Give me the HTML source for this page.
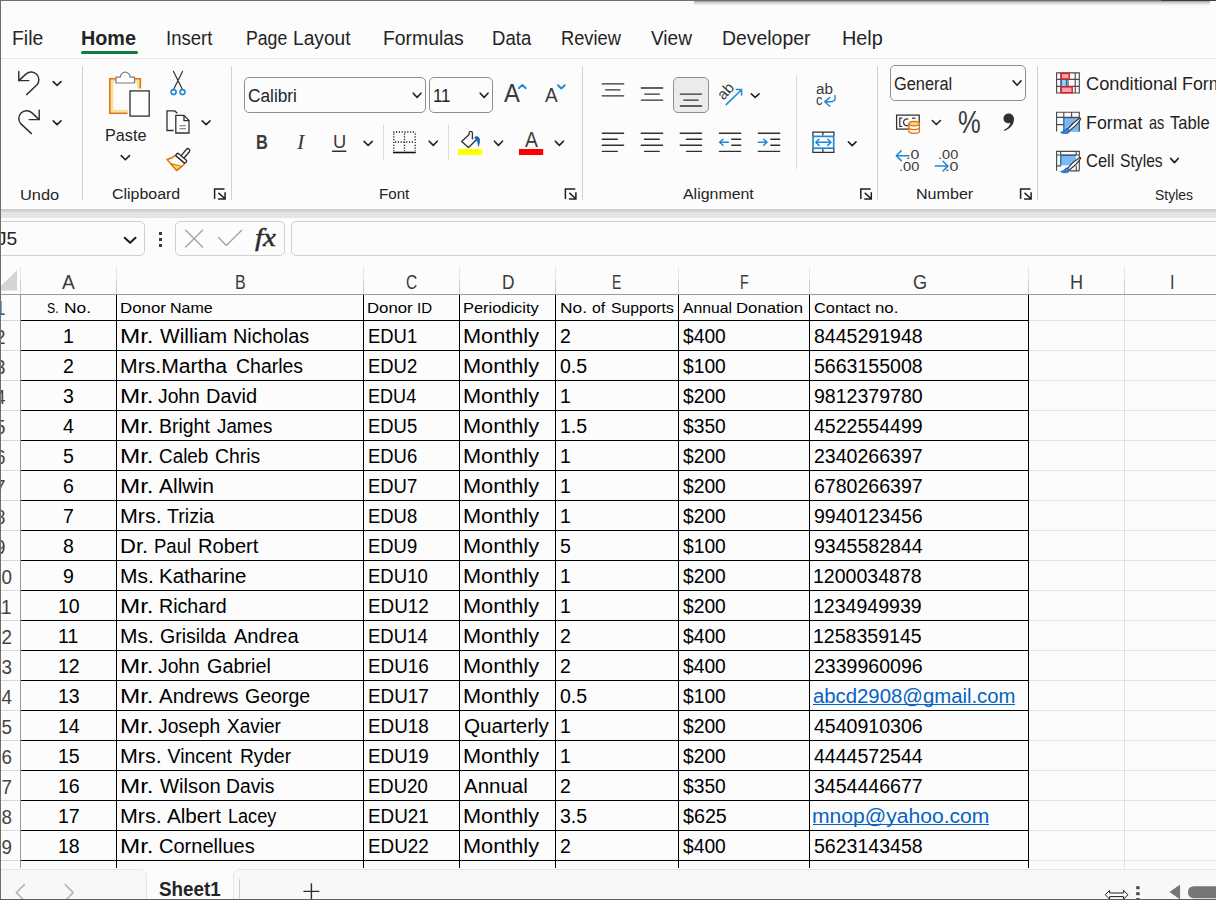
<!DOCTYPE html>
<html lang="en"><head><meta charset="utf-8"><title>Excel - Donor list</title>
<style>
html,body{margin:0;padding:0;}
body{width:1216px;height:900px;overflow:hidden;background:#fcfcfc;font-family:"Liberation Sans", sans-serif;color:#242424;}
#app{position:relative;width:1216px;height:900px;overflow:hidden;}
.b{position:absolute;box-sizing:border-box;}
.t{position:absolute;white-space:nowrap;line-height:1;transform-origin:0 0;}
svg{position:absolute;overflow:visible;}
.fx{-webkit-text-stroke:.45px #2b2b2b;}
</style></head><body><div id="app">
<div class="b" style="left:0px;top:0px;width:1216px;height:59px;background:#fcfcfc;"></div>
<div class="b" style="left:0px;top:58px;width:1216px;height:1px;background:#e6e6e6;"></div>
<div class="b" style="left:0px;top:59px;width:1216px;height:150px;background:#fcfcfc;"></div>
<div class="b" style="left:0px;top:209px;width:1216px;height:3px;background:linear-gradient(#c9c9c9,#d6d6d6);"></div>
<div class="b" style="left:0px;top:212px;width:1216px;height:6px;background:#e4e4e4;"></div>
<div class="b" style="left:0px;top:218px;width:1216px;height:49px;background:#fcfcfc;"></div>
<div class="b" style="left:0px;top:267px;width:1216px;height:602px;background:#fcfcfc;"></div>
<div class="b" style="left:694px;top:1px;width:516px;height:5px;background:linear-gradient(#9a9a9a,#d9d9d9 40%,#f1f1f1 80%,#fbfbfb);"></div>
<div class="b" style="left:81px;top:51px;width:57px;height:3px;background:#107c41;border-radius:1.5px;"></div>
<div class="b" style="left:82px;top:66px;width:1px;height:134px;background:#d2d2d2;"></div>
<div class="b" style="left:231px;top:66px;width:1px;height:134px;background:#d2d2d2;"></div>
<div class="b" style="left:582px;top:66px;width:1px;height:134px;background:#d2d2d2;"></div>
<div class="b" style="left:877px;top:66px;width:1px;height:134px;background:#d2d2d2;"></div>
<div class="b" style="left:1037px;top:66px;width:1px;height:134px;background:#d2d2d2;"></div>
<div class="b" style="left:383px;top:125px;width:1px;height:35px;background:#dcdcdc;"></div>
<div class="b" style="left:448px;top:125px;width:1px;height:35px;background:#dcdcdc;"></div>
<div class="b" style="left:796px;top:75px;width:1px;height:94px;background:#dcdcdc;"></div>
<div class="b" style="left:244px;top:77px;width:182px;height:36px;background:#fcfcfc;border:1px solid #8f8f8f;border-radius:5px;"></div>
<div class="b" style="left:429px;top:77px;width:64px;height:36px;background:#fcfcfc;border:1px solid #8f8f8f;border-radius:5px;"></div>
<div class="b" style="left:890px;top:65px;width:136px;height:36px;background:#fcfcfc;border:1px solid #8f8f8f;border-radius:5px;"></div>
<div class="b" style="left:673px;top:77px;width:36px;height:36px;background:#ebebeb;border:1px solid #8f8f8f;border-radius:5px;"></div>
<div class="b" style="left:-6px;top:221px;width:151px;height:35px;background:#fcfcfc;border:1px solid #d0d0d0;border-radius:5px;"></div>
<div class="b" style="left:175px;top:221px;width:110px;height:35px;background:#fcfcfc;border:1px solid #d0d0d0;border-radius:5px;"></div>
<div class="b" style="left:291px;top:221px;width:940px;height:35px;background:#fcfcfc;border:1px solid #d0d0d0;border-radius:5px;"></div>
<div class="b" style="left:158.5px;top:231.5px;width:3px;height:3px;background:#3a3a3a;"></div>
<div class="b" style="left:158.5px;top:237.5px;width:3px;height:3px;background:#3a3a3a;"></div>
<div class="b" style="left:158.5px;top:243.5px;width:3px;height:3px;background:#3a3a3a;"></div>
<div class="b" style="left:20px;top:267px;width:1px;height:27px;background:linear-gradient(#e8e8e8 0 50%,#cfcfcf 50% 100%);"></div>
<div class="b" style="left:116px;top:267px;width:1px;height:27px;background:linear-gradient(#e8e8e8 0 50%,#cfcfcf 50% 100%);"></div>
<div class="b" style="left:363px;top:267px;width:1px;height:27px;background:linear-gradient(#e8e8e8 0 50%,#cfcfcf 50% 100%);"></div>
<div class="b" style="left:459px;top:267px;width:1px;height:27px;background:linear-gradient(#e8e8e8 0 50%,#cfcfcf 50% 100%);"></div>
<div class="b" style="left:555px;top:267px;width:1px;height:27px;background:linear-gradient(#e8e8e8 0 50%,#cfcfcf 50% 100%);"></div>
<div class="b" style="left:678px;top:267px;width:1px;height:27px;background:linear-gradient(#e8e8e8 0 50%,#cfcfcf 50% 100%);"></div>
<div class="b" style="left:809px;top:267px;width:1px;height:27px;background:linear-gradient(#e8e8e8 0 50%,#cfcfcf 50% 100%);"></div>
<div class="b" style="left:1028px;top:267px;width:1px;height:27px;background:linear-gradient(#e8e8e8 0 50%,#cfcfcf 50% 100%);"></div>
<div class="b" style="left:1124px;top:267px;width:1px;height:27px;background:linear-gradient(#e8e8e8 0 50%,#cfcfcf 50% 100%);"></div>
<div class="b" style="left:1029px;top:320px;width:190px;height:1px;background:#e3e3e3;"></div>
<div class="b" style="left:1029px;top:350px;width:190px;height:1px;background:#e3e3e3;"></div>
<div class="b" style="left:1029px;top:380px;width:190px;height:1px;background:#e3e3e3;"></div>
<div class="b" style="left:1029px;top:410px;width:190px;height:1px;background:#e3e3e3;"></div>
<div class="b" style="left:1029px;top:440px;width:190px;height:1px;background:#e3e3e3;"></div>
<div class="b" style="left:1029px;top:470px;width:190px;height:1px;background:#e3e3e3;"></div>
<div class="b" style="left:1029px;top:500px;width:190px;height:1px;background:#e3e3e3;"></div>
<div class="b" style="left:1029px;top:530px;width:190px;height:1px;background:#e3e3e3;"></div>
<div class="b" style="left:1029px;top:560px;width:190px;height:1px;background:#e3e3e3;"></div>
<div class="b" style="left:1029px;top:590px;width:190px;height:1px;background:#e3e3e3;"></div>
<div class="b" style="left:1029px;top:620px;width:190px;height:1px;background:#e3e3e3;"></div>
<div class="b" style="left:1029px;top:650px;width:190px;height:1px;background:#e3e3e3;"></div>
<div class="b" style="left:1029px;top:680px;width:190px;height:1px;background:#e3e3e3;"></div>
<div class="b" style="left:1029px;top:710px;width:190px;height:1px;background:#e3e3e3;"></div>
<div class="b" style="left:1029px;top:740px;width:190px;height:1px;background:#e3e3e3;"></div>
<div class="b" style="left:1029px;top:770px;width:190px;height:1px;background:#e3e3e3;"></div>
<div class="b" style="left:1029px;top:800px;width:190px;height:1px;background:#e3e3e3;"></div>
<div class="b" style="left:1029px;top:830px;width:190px;height:1px;background:#e3e3e3;"></div>
<div class="b" style="left:1029px;top:860px;width:190px;height:1px;background:#e3e3e3;"></div>
<div class="b" style="left:1124px;top:295px;width:1px;height:574px;background:#e3e3e3;"></div>
<div class="b" style="left:1px;top:320px;width:19px;height:1px;background:#d9d9d9;"></div>
<div class="b" style="left:1px;top:350px;width:19px;height:1px;background:#d9d9d9;"></div>
<div class="b" style="left:1px;top:380px;width:19px;height:1px;background:#d9d9d9;"></div>
<div class="b" style="left:1px;top:410px;width:19px;height:1px;background:#d9d9d9;"></div>
<div class="b" style="left:1px;top:440px;width:19px;height:1px;background:#d9d9d9;"></div>
<div class="b" style="left:1px;top:470px;width:19px;height:1px;background:#d9d9d9;"></div>
<div class="b" style="left:1px;top:500px;width:19px;height:1px;background:#d9d9d9;"></div>
<div class="b" style="left:1px;top:530px;width:19px;height:1px;background:#d9d9d9;"></div>
<div class="b" style="left:1px;top:560px;width:19px;height:1px;background:#d9d9d9;"></div>
<div class="b" style="left:1px;top:590px;width:19px;height:1px;background:#d9d9d9;"></div>
<div class="b" style="left:1px;top:620px;width:19px;height:1px;background:#d9d9d9;"></div>
<div class="b" style="left:1px;top:650px;width:19px;height:1px;background:#d9d9d9;"></div>
<div class="b" style="left:1px;top:680px;width:19px;height:1px;background:#d9d9d9;"></div>
<div class="b" style="left:1px;top:710px;width:19px;height:1px;background:#d9d9d9;"></div>
<div class="b" style="left:1px;top:740px;width:19px;height:1px;background:#d9d9d9;"></div>
<div class="b" style="left:1px;top:770px;width:19px;height:1px;background:#d9d9d9;"></div>
<div class="b" style="left:1px;top:800px;width:19px;height:1px;background:#d9d9d9;"></div>
<div class="b" style="left:1px;top:830px;width:19px;height:1px;background:#d9d9d9;"></div>
<div class="b" style="left:1px;top:860px;width:19px;height:1px;background:#d9d9d9;"></div>
<div class="b" style="left:21px;top:320px;width:1008px;height:1px;background:#000;"></div>
<div class="b" style="left:21px;top:350px;width:1008px;height:1px;background:#000;"></div>
<div class="b" style="left:21px;top:380px;width:1008px;height:1px;background:#000;"></div>
<div class="b" style="left:21px;top:410px;width:1008px;height:1px;background:#000;"></div>
<div class="b" style="left:21px;top:440px;width:1008px;height:1px;background:#000;"></div>
<div class="b" style="left:21px;top:470px;width:1008px;height:1px;background:#000;"></div>
<div class="b" style="left:21px;top:500px;width:1008px;height:1px;background:#000;"></div>
<div class="b" style="left:21px;top:530px;width:1008px;height:1px;background:#000;"></div>
<div class="b" style="left:21px;top:560px;width:1008px;height:1px;background:#000;"></div>
<div class="b" style="left:21px;top:590px;width:1008px;height:1px;background:#000;"></div>
<div class="b" style="left:21px;top:620px;width:1008px;height:1px;background:#000;"></div>
<div class="b" style="left:21px;top:650px;width:1008px;height:1px;background:#000;"></div>
<div class="b" style="left:21px;top:680px;width:1008px;height:1px;background:#000;"></div>
<div class="b" style="left:21px;top:710px;width:1008px;height:1px;background:#000;"></div>
<div class="b" style="left:21px;top:740px;width:1008px;height:1px;background:#000;"></div>
<div class="b" style="left:21px;top:770px;width:1008px;height:1px;background:#000;"></div>
<div class="b" style="left:21px;top:800px;width:1008px;height:1px;background:#000;"></div>
<div class="b" style="left:21px;top:830px;width:1008px;height:1px;background:#000;"></div>
<div class="b" style="left:21px;top:860px;width:1008px;height:1px;background:#000;"></div>
<div class="b" style="left:116px;top:295px;width:1px;height:574px;background:#000;"></div>
<div class="b" style="left:363px;top:295px;width:1px;height:574px;background:#000;"></div>
<div class="b" style="left:459px;top:295px;width:1px;height:574px;background:#000;"></div>
<div class="b" style="left:555px;top:295px;width:1px;height:574px;background:#000;"></div>
<div class="b" style="left:678px;top:295px;width:1px;height:574px;background:#000;"></div>
<div class="b" style="left:809px;top:295px;width:1px;height:574px;background:#000;"></div>
<div class="b" style="left:1028px;top:295px;width:1px;height:574px;background:#000;"></div>
<div class="b" style="left:1px;top:294px;width:1216px;height:1px;background:#9b9b9b;"></div>
<div class="b" style="left:20px;top:295px;width:1px;height:574px;background:#9b9b9b;"></div>
<svg style="left:1px;top:270px" width="16" height="21" viewBox="0 0 16 21"><path d="M16 0V20.6H-4.6Z" fill="#d4d4d4"/></svg>
<div class="b" style="left:813px;top:704px;width:202.20000000000005px;height:1.3px;background:#0563c1;"></div>
<div class="b" style="left:813px;top:824px;width:176.0px;height:1.3px;background:#0563c1;"></div>
<span class="t" style="left:12.49px;top:29.00px;font-size:19.3px;transform:scaleX(1.0053);">File</span>
<span class="t" style="left:80.97px;top:29.00px;font-size:19.3px;transform:scaleX(1.0256);font-weight:700;">Home</span>
<span class="t" style="left:166.04px;top:29.00px;font-size:19.3px;transform:scaleX(0.9610);">Insert</span>
<span class="g"><span class="t" style="left:246.38px;top:29.00px;font-size:19.3px;transform:scaleX(0.9167);">Page</span> <span class="t" style="left:293.31px;top:29.00px;font-size:19.3px;transform:scaleX(0.9942);">Layout</span></span>
<span class="t" style="left:383.00px;top:29.00px;font-size:19.3px;transform:scaleX(1.0036);">Formulas</span>
<span class="t" style="left:492.04px;top:29.00px;font-size:19.3px;transform:scaleX(0.9624);">Data</span>
<span class="t" style="left:561.05px;top:29.00px;font-size:19.3px;transform:scaleX(0.9471);">Review</span>
<span class="t" style="left:651.00px;top:29.00px;font-size:19.3px;transform:scaleX(0.9875);">View</span>
<span class="t" style="left:721.99px;top:29.00px;font-size:19.3px;transform:scaleX(1.0061);">Developer</span>
<span class="t" style="left:841.97px;top:29.00px;font-size:19.3px;transform:scaleX(1.0282);">Help</span>
<span class="t" style="left:20.44px;top:187.00px;font-size:15.5px;transform:scaleX(1.0583);">Undo</span>
<span class="t" style="left:111.50px;top:186.00px;font-size:15.5px;transform:scaleX(1.0270);">Clipboard</span>
<span class="t" style="left:379.02px;top:186.00px;font-size:15.5px;transform:scaleX(0.9769);">Font</span>
<span class="t" style="left:682.50px;top:186.00px;font-size:15.5px;transform:scaleX(1.0270);">Alignment</span>
<span class="t" style="left:915.96px;top:186.00px;font-size:15.5px;transform:scaleX(1.0377);">Number</span>
<span class="t" style="left:1155.00px;top:187.00px;font-size:15.5px;transform:scaleX(0.8997);">Styles</span>
<span class="t" style="left:105.05px;top:127.00px;font-size:17px;transform:scaleX(0.9520);">Paste</span>
<span class="t" style="left:247.50px;top:87.00px;font-size:18px;transform:scaleX(0.9598);">Calibri</span>
<span class="t" style="left:432.57px;top:87.00px;font-size:18px;transform:scaleX(0.9335);">11</span>
<span class="t" style="left:893.70px;top:75.00px;font-size:18px;transform:scaleX(0.9090);">General</span>
<span class="g"><span class="t" style="left:1085.80px;top:75.00px;font-size:18.2px;transform:scaleX(1.0027);">Conditional</span> <span class="t" style="left:1182.32px;top:75.00px;font-size:18.2px;transform:scaleX(0.9800);">Formatting</span></span>
<span class="g"><span class="t" style="left:1085.82px;top:114.00px;font-size:18.2px;transform:scaleX(0.9797);">Format</span> <span class="t" style="left:1148.70px;top:114.00px;font-size:18.2px;transform:scaleX(0.8004);">as</span> <span class="t" style="left:1170.20px;top:114.00px;font-size:18.2px;transform:scaleX(0.9109);">Table</span></span>
<span class="g"><span class="t" style="left:1085.80px;top:152.00px;font-size:18.2px;transform:scaleX(0.9079);">Cell</span> <span class="t" style="left:1120.10px;top:152.00px;font-size:18.2px;transform:scaleX(0.8618);">Styles</span></span>
<span class="t" style="left:-3.00px;top:230.00px;font-size:18.5px;transform:scaleX(1.0390);">J5</span>
<span class="t fx" style="left:255.10px;top:225.00px;font-size:26px;transform:scaleX(1.1184);font-style:italic;font-family:'Liberation Serif', serif;color:#2b2b2b;">fx</span>
<span class="t" style="left:62.10px;top:273.00px;font-size:19.4px;transform:scaleX(0.9923);color:#3b3b3b;">A</span>
<span class="t" style="left:235.27px;top:273.00px;font-size:19.4px;transform:scaleX(0.8273);color:#3b3b3b;">B</span>
<span class="t" style="left:406.30px;top:273.00px;font-size:19.4px;transform:scaleX(0.8000);color:#3b3b3b;">C</span>
<span class="t" style="left:501.71px;top:273.00px;font-size:19.4px;transform:scaleX(0.8923);color:#3b3b3b;">D</span>
<span class="t" style="left:612.27px;top:273.00px;font-size:19.4px;transform:scaleX(0.7250);color:#3b3b3b;">E</span>
<span class="t" style="left:739.66px;top:273.00px;font-size:19.4px;transform:scaleX(0.7364);color:#3b3b3b;">F</span>
<span class="t" style="left:912.60px;top:273.00px;font-size:19.4px;transform:scaleX(0.9357);color:#3b3b3b;">G</span>
<span class="t" style="left:1070.27px;top:273.00px;font-size:19.4px;transform:scaleX(0.9333);color:#3b3b3b;">H</span>
<span class="t" style="left:1170.47px;top:273.00px;font-size:19.4px;transform:scaleX(0.8333);color:#3b3b3b;">I</span>
<span class="t rn" style="left:-4.73px;top:299.00px;font-size:19.4px;transform:scaleX(0.9700);color:#444;">1</span>
<span class="t rn" style="left:-4.73px;top:328.00px;font-size:19.4px;transform:scaleX(0.9700);color:#444;">2</span>
<span class="t rn" style="left:-4.73px;top:358.00px;font-size:19.4px;transform:scaleX(0.9700);color:#444;">3</span>
<span class="t rn" style="left:-4.73px;top:388.00px;font-size:19.4px;transform:scaleX(0.9700);color:#444;">4</span>
<span class="t rn" style="left:-4.73px;top:418.00px;font-size:19.4px;transform:scaleX(0.9700);color:#444;">5</span>
<span class="t rn" style="left:-4.73px;top:448.00px;font-size:19.4px;transform:scaleX(0.9700);color:#444;">6</span>
<span class="t rn" style="left:-4.73px;top:478.00px;font-size:19.4px;transform:scaleX(0.9700);color:#444;">7</span>
<span class="t rn" style="left:-4.73px;top:508.00px;font-size:19.4px;transform:scaleX(0.9700);color:#444;">8</span>
<span class="t rn" style="left:-4.73px;top:538.00px;font-size:19.4px;transform:scaleX(0.9700);color:#444;">9</span>
<span class="t rn" style="left:-8.76px;top:568.00px;font-size:19.4px;transform:scaleX(0.9700);color:#444;">10</span>
<span class="t rn" style="left:-8.06px;top:598.00px;font-size:19.4px;transform:scaleX(0.9700);color:#444;">11</span>
<span class="t rn" style="left:-8.76px;top:628.00px;font-size:19.4px;transform:scaleX(0.9700);color:#444;">12</span>
<span class="t rn" style="left:-8.76px;top:658.00px;font-size:19.4px;transform:scaleX(0.9700);color:#444;">13</span>
<span class="t rn" style="left:-8.76px;top:688.00px;font-size:19.4px;transform:scaleX(0.9700);color:#444;">14</span>
<span class="t rn" style="left:-8.76px;top:718.00px;font-size:19.4px;transform:scaleX(0.9700);color:#444;">15</span>
<span class="t rn" style="left:-8.76px;top:748.00px;font-size:19.4px;transform:scaleX(0.9700);color:#444;">16</span>
<span class="t rn" style="left:-8.76px;top:778.00px;font-size:19.4px;transform:scaleX(0.9700);color:#444;">17</span>
<span class="t rn" style="left:-8.76px;top:808.00px;font-size:19.4px;transform:scaleX(0.9700);color:#444;">18</span>
<span class="t rn" style="left:-8.76px;top:838.00px;font-size:19.4px;transform:scaleX(0.9700);color:#444;">19</span>
<span class="t rn" style="left:-8.76px;top:868.00px;font-size:19.4px;transform:scaleX(0.9700);color:#444;">20</span>
<span class="g"><span class="t" style="left:47.40px;top:301.00px;font-size:14.5px;transform:scaleX(0.8444);color:#000;">S.</span> <span class="t" style="left:63.50px;top:301.00px;font-size:14.5px;transform:scaleX(1.1979);color:#000;">No.</span></span>
<span class="g"><span class="t" style="left:119.74px;top:301.00px;font-size:14.5px;transform:scaleX(1.1613);color:#000;">Donor</span> <span class="t" style="left:170.49px;top:301.00px;font-size:14.5px;transform:scaleX(1.1060);color:#000;">Name</span></span>
<span class="g"><span class="t" style="left:366.74px;top:301.00px;font-size:14.5px;transform:scaleX(1.1561);color:#000;">Donor</span> <span class="t" style="left:417.36px;top:301.00px;font-size:14.5px;transform:scaleX(1.0362);color:#000;">ID</span></span>
<span class="g"><span class="t" style="left:462.77px;top:301.00px;font-size:14.5px;transform:scaleX(1.1315);color:#000;">Periodicity</span></span>
<span class="g"><span class="t" style="left:559.60px;top:301.00px;font-size:14.5px;transform:scaleX(1.1979);color:#000;">No.</span> <span class="t" style="left:591.50px;top:301.00px;font-size:14.5px;transform:scaleX(1.0869);color:#000;">of</span> <span class="t" style="left:610.60px;top:301.00px;font-size:14.5px;transform:scaleX(1.0816);color:#000;">Supports</span></span>
<span class="g"><span class="t" style="left:682.50px;top:301.00px;font-size:14.5px;transform:scaleX(1.0840);color:#000;">Annual</span> <span class="t" style="left:736.15px;top:301.00px;font-size:14.5px;transform:scaleX(1.1548);color:#000;">Donation</span></span>
<span class="g"><span class="t" style="left:813.75px;top:301.00px;font-size:14.5px;transform:scaleX(1.1263);color:#000;">Contact</span> <span class="t" style="left:875.40px;top:301.00px;font-size:14.5px;transform:scaleX(1.1606);color:#000;">no.</span></span>
<span class="t" style="left:63.17px;top:327.00px;font-size:19.4px;transform:scaleX(1.0070);color:#000;">1</span>
<span class="g"><span class="t" style="left:120.15px;top:327.00px;font-size:19.4px;transform:scaleX(1.2470);color:#000;">Mr.</span> <span class="t" style="left:159.60px;top:327.00px;font-size:19.4px;transform:scaleX(1.0764);color:#000;">William</span> <span class="t" style="left:232.58px;top:327.00px;font-size:19.4px;transform:scaleX(1.0238);color:#000;">Nicholas</span></span>
<span class="t" style="left:367.55px;top:327.00px;font-size:19.4px;transform:scaleX(0.9511);color:#000;">EDU1</span>
<span class="t" style="left:462.88px;top:327.00px;font-size:19.4px;transform:scaleX(1.1198);color:#000;">Monthly</span>
<span class="t" style="left:560.40px;top:327.00px;font-size:19.4px;transform:scaleX(1.0070);color:#000;">2</span>
<span class="t" style="left:682.75px;top:327.00px;font-size:19.4px;transform:scaleX(0.9919);color:#000;">$400</span>
<span class="t" style="left:813.75px;top:327.00px;font-size:19.4px;transform:scaleX(1.0070);color:#000;">8445291948</span>
<span class="t" style="left:63.17px;top:357.00px;font-size:19.4px;transform:scaleX(1.0070);color:#000;">2</span>
<span class="g"><span class="t" style="left:120.31px;top:357.00px;font-size:19.4px;transform:scaleX(1.0919);color:#000;">Mrs.Martha</span> <span class="t" style="left:235.60px;top:357.00px;font-size:19.4px;transform:scaleX(1.0042);color:#000;">Charles</span></span>
<span class="t" style="left:367.55px;top:357.00px;font-size:19.4px;transform:scaleX(0.9511);color:#000;">EDU2</span>
<span class="t" style="left:462.88px;top:357.00px;font-size:19.4px;transform:scaleX(1.1198);color:#000;">Monthly</span>
<span class="t" style="left:560.40px;top:357.00px;font-size:19.4px;transform:scaleX(1.0070);color:#000;">0.5</span>
<span class="t" style="left:682.75px;top:357.00px;font-size:19.4px;transform:scaleX(0.9919);color:#000;">$100</span>
<span class="t" style="left:813.75px;top:357.00px;font-size:19.4px;transform:scaleX(1.0070);color:#000;">5663155008</span>
<span class="t" style="left:63.17px;top:387.00px;font-size:19.4px;transform:scaleX(1.0070);color:#000;">3</span>
<span class="g"><span class="t" style="left:120.15px;top:387.00px;font-size:19.4px;transform:scaleX(1.2470);color:#000;">Mr.</span> <span class="t" style="left:158.00px;top:387.00px;font-size:19.4px;transform:scaleX(0.9936);color:#000;">John</span> <span class="t" style="left:206.37px;top:387.00px;font-size:19.4px;transform:scaleX(1.0295);color:#000;">David</span></span>
<span class="t" style="left:367.57px;top:387.00px;font-size:19.4px;transform:scaleX(0.9325);color:#000;">EDU4</span>
<span class="t" style="left:462.88px;top:387.00px;font-size:19.4px;transform:scaleX(1.1198);color:#000;">Monthly</span>
<span class="t" style="left:560.19px;top:387.00px;font-size:19.4px;transform:scaleX(1.0070);color:#000;">1</span>
<span class="t" style="left:682.75px;top:387.00px;font-size:19.4px;transform:scaleX(0.9919);color:#000;">$200</span>
<span class="t" style="left:813.75px;top:387.00px;font-size:19.4px;transform:scaleX(1.0070);color:#000;">9812379780</span>
<span class="t" style="left:63.17px;top:417.00px;font-size:19.4px;transform:scaleX(1.0070);color:#000;">4</span>
<span class="g"><span class="t" style="left:120.15px;top:417.00px;font-size:19.4px;transform:scaleX(1.2470);color:#000;">Mr.</span> <span class="t" style="left:158.60px;top:417.00px;font-size:19.4px;transform:scaleX(1.0026);color:#000;">Bright</span> <span class="t" style="left:217.00px;top:417.00px;font-size:19.4px;transform:scaleX(0.9678);color:#000;">James</span></span>
<span class="t" style="left:367.55px;top:417.00px;font-size:19.4px;transform:scaleX(0.9511);color:#000;">EDU5</span>
<span class="t" style="left:462.88px;top:417.00px;font-size:19.4px;transform:scaleX(1.1198);color:#000;">Monthly</span>
<span class="t" style="left:560.19px;top:417.00px;font-size:19.4px;transform:scaleX(1.0070);color:#000;">1.5</span>
<span class="t" style="left:682.75px;top:417.00px;font-size:19.4px;transform:scaleX(0.9919);color:#000;">$350</span>
<span class="t" style="left:813.75px;top:417.00px;font-size:19.4px;transform:scaleX(1.0070);color:#000;">4522554499</span>
<span class="t" style="left:63.17px;top:447.00px;font-size:19.4px;transform:scaleX(1.0070);color:#000;">5</span>
<span class="g"><span class="t" style="left:120.15px;top:447.00px;font-size:19.4px;transform:scaleX(1.2470);color:#000;">Mr.</span> <span class="t" style="left:159.00px;top:447.00px;font-size:19.4px;transform:scaleX(0.9743);color:#000;">Caleb</span> <span class="t" style="left:214.60px;top:447.00px;font-size:19.4px;transform:scaleX(0.9966);color:#000;">Chris</span></span>
<span class="t" style="left:367.55px;top:447.00px;font-size:19.4px;transform:scaleX(0.9511);color:#000;">EDU6</span>
<span class="t" style="left:462.88px;top:447.00px;font-size:19.4px;transform:scaleX(1.1198);color:#000;">Monthly</span>
<span class="t" style="left:560.19px;top:447.00px;font-size:19.4px;transform:scaleX(1.0070);color:#000;">1</span>
<span class="t" style="left:682.75px;top:447.00px;font-size:19.4px;transform:scaleX(0.9919);color:#000;">$200</span>
<span class="t" style="left:813.75px;top:447.00px;font-size:19.4px;transform:scaleX(1.0070);color:#000;">2340266397</span>
<span class="t" style="left:63.17px;top:477.00px;font-size:19.4px;transform:scaleX(1.0070);color:#000;">6</span>
<span class="g"><span class="t" style="left:120.15px;top:477.00px;font-size:19.4px;transform:scaleX(1.2470);color:#000;">Mr.</span> <span class="t" style="left:158.60px;top:477.00px;font-size:19.4px;transform:scaleX(1.0830);color:#000;">Allwin</span></span>
<span class="t" style="left:367.55px;top:477.00px;font-size:19.4px;transform:scaleX(0.9511);color:#000;">EDU7</span>
<span class="t" style="left:462.88px;top:477.00px;font-size:19.4px;transform:scaleX(1.1198);color:#000;">Monthly</span>
<span class="t" style="left:560.19px;top:477.00px;font-size:19.4px;transform:scaleX(1.0070);color:#000;">1</span>
<span class="t" style="left:682.75px;top:477.00px;font-size:19.4px;transform:scaleX(0.9919);color:#000;">$200</span>
<span class="t" style="left:813.75px;top:477.00px;font-size:19.4px;transform:scaleX(1.0070);color:#000;">6780266397</span>
<span class="t" style="left:63.17px;top:507.00px;font-size:19.4px;transform:scaleX(1.0070);color:#000;">7</span>
<span class="g"><span class="t" style="left:120.30px;top:507.00px;font-size:19.4px;transform:scaleX(1.1047);color:#000;">Mrs.</span> <span class="t" style="left:167.00px;top:507.00px;font-size:19.4px;transform:scaleX(1.0108);color:#000;">Trizia</span></span>
<span class="t" style="left:367.55px;top:507.00px;font-size:19.4px;transform:scaleX(0.9511);color:#000;">EDU8</span>
<span class="t" style="left:462.88px;top:507.00px;font-size:19.4px;transform:scaleX(1.1198);color:#000;">Monthly</span>
<span class="t" style="left:560.19px;top:507.00px;font-size:19.4px;transform:scaleX(1.0070);color:#000;">1</span>
<span class="t" style="left:682.75px;top:507.00px;font-size:19.4px;transform:scaleX(0.9919);color:#000;">$200</span>
<span class="t" style="left:813.75px;top:507.00px;font-size:19.4px;transform:scaleX(1.0070);color:#000;">9940123456</span>
<span class="t" style="left:63.17px;top:537.00px;font-size:19.4px;transform:scaleX(1.0070);color:#000;">8</span>
<span class="g"><span class="t" style="left:120.47px;top:537.00px;font-size:19.4px;transform:scaleX(1.1344);color:#000;">Dr.</span> <span class="t" style="left:153.65px;top:537.00px;font-size:19.4px;transform:scaleX(0.9546);color:#000;">Paul</span> <span class="t" style="left:197.56px;top:537.00px;font-size:19.4px;transform:scaleX(1.0378);color:#000;">Robert</span></span>
<span class="t" style="left:367.55px;top:537.00px;font-size:19.4px;transform:scaleX(0.9511);color:#000;">EDU9</span>
<span class="t" style="left:462.88px;top:537.00px;font-size:19.4px;transform:scaleX(1.1198);color:#000;">Monthly</span>
<span class="t" style="left:560.40px;top:537.00px;font-size:19.4px;transform:scaleX(1.0070);color:#000;">5</span>
<span class="t" style="left:682.75px;top:537.00px;font-size:19.4px;transform:scaleX(0.9919);color:#000;">$100</span>
<span class="t" style="left:813.75px;top:537.00px;font-size:19.4px;transform:scaleX(1.0070);color:#000;">9345582844</span>
<span class="t" style="left:63.17px;top:567.00px;font-size:19.4px;transform:scaleX(1.0070);color:#000;">9</span>
<span class="g"><span class="t" style="left:120.32px;top:567.00px;font-size:19.4px;transform:scaleX(1.0815);color:#000;">Ms.</span> <span class="t" style="left:159.35px;top:567.00px;font-size:19.4px;transform:scaleX(1.0539);color:#000;">Katharine</span></span>
<span class="t" style="left:367.54px;top:567.00px;font-size:19.4px;transform:scaleX(0.9559);color:#000;">EDU10</span>
<span class="t" style="left:462.88px;top:567.00px;font-size:19.4px;transform:scaleX(1.1198);color:#000;">Monthly</span>
<span class="t" style="left:560.19px;top:567.00px;font-size:19.4px;transform:scaleX(1.0070);color:#000;">1</span>
<span class="t" style="left:682.75px;top:567.00px;font-size:19.4px;transform:scaleX(0.9919);color:#000;">$200</span>
<span class="t" style="left:812.74px;top:567.00px;font-size:19.4px;transform:scaleX(1.0070);color:#000;">1200034878</span>
<span class="t" style="left:57.74px;top:597.00px;font-size:19.4px;transform:scaleX(1.0070);color:#000;">10</span>
<span class="g"><span class="t" style="left:120.15px;top:597.00px;font-size:19.4px;transform:scaleX(1.2470);color:#000;">Mr.</span> <span class="t" style="left:158.59px;top:597.00px;font-size:19.4px;transform:scaleX(1.0118);color:#000;">Richard</span></span>
<span class="t" style="left:367.53px;top:597.00px;font-size:19.4px;transform:scaleX(0.9716);color:#000;">EDU12</span>
<span class="t" style="left:462.88px;top:597.00px;font-size:19.4px;transform:scaleX(1.1198);color:#000;">Monthly</span>
<span class="t" style="left:560.19px;top:597.00px;font-size:19.4px;transform:scaleX(1.0070);color:#000;">1</span>
<span class="t" style="left:682.75px;top:597.00px;font-size:19.4px;transform:scaleX(0.9919);color:#000;">$200</span>
<span class="t" style="left:812.74px;top:597.00px;font-size:19.4px;transform:scaleX(1.0070);color:#000;">1234949939</span>
<span class="t" style="left:58.47px;top:627.00px;font-size:19.4px;transform:scaleX(1.0070);color:#000;">11</span>
<span class="g"><span class="t" style="left:120.32px;top:627.00px;font-size:19.4px;transform:scaleX(1.0815);color:#000;">Ms.</span> <span class="t" style="left:159.60px;top:627.00px;font-size:19.4px;transform:scaleX(1.0069);color:#000;">Grisilda</span> <span class="t" style="left:233.60px;top:627.00px;font-size:19.4px;transform:scaleX(1.0328);color:#000;">Andrea</span></span>
<span class="t" style="left:367.54px;top:627.00px;font-size:19.4px;transform:scaleX(0.9559);color:#000;">EDU14</span>
<span class="t" style="left:462.88px;top:627.00px;font-size:19.4px;transform:scaleX(1.1198);color:#000;">Monthly</span>
<span class="t" style="left:560.40px;top:627.00px;font-size:19.4px;transform:scaleX(1.0070);color:#000;">2</span>
<span class="t" style="left:682.75px;top:627.00px;font-size:19.4px;transform:scaleX(0.9919);color:#000;">$400</span>
<span class="t" style="left:812.74px;top:627.00px;font-size:19.4px;transform:scaleX(1.0070);color:#000;">1258359145</span>
<span class="t" style="left:57.74px;top:657.00px;font-size:19.4px;transform:scaleX(1.0070);color:#000;">12</span>
<span class="g"><span class="t" style="left:120.15px;top:657.00px;font-size:19.4px;transform:scaleX(1.2470);color:#000;">Mr.</span> <span class="t" style="left:158.00px;top:657.00px;font-size:19.4px;transform:scaleX(0.9936);color:#000;">John</span> <span class="t" style="left:207.40px;top:657.00px;font-size:19.4px;transform:scaleX(1.0225);color:#000;">Gabriel</span></span>
<span class="t" style="left:367.53px;top:657.00px;font-size:19.4px;transform:scaleX(0.9716);color:#000;">EDU16</span>
<span class="t" style="left:462.88px;top:657.00px;font-size:19.4px;transform:scaleX(1.1198);color:#000;">Monthly</span>
<span class="t" style="left:560.40px;top:657.00px;font-size:19.4px;transform:scaleX(1.0070);color:#000;">2</span>
<span class="t" style="left:682.75px;top:657.00px;font-size:19.4px;transform:scaleX(0.9919);color:#000;">$400</span>
<span class="t" style="left:813.75px;top:657.00px;font-size:19.4px;transform:scaleX(1.0070);color:#000;">2339960096</span>
<span class="t" style="left:57.74px;top:687.00px;font-size:19.4px;transform:scaleX(1.0070);color:#000;">13</span>
<span class="g"><span class="t" style="left:120.15px;top:687.00px;font-size:19.4px;transform:scaleX(1.2470);color:#000;">Mr.</span> <span class="t" style="left:158.60px;top:687.00px;font-size:19.4px;transform:scaleX(1.0542);color:#000;">Andrews</span> <span class="t" style="left:244.60px;top:687.00px;font-size:19.4px;transform:scaleX(1.0079);color:#000;">George</span></span>
<span class="t" style="left:367.53px;top:687.00px;font-size:19.4px;transform:scaleX(0.9716);color:#000;">EDU17</span>
<span class="t" style="left:462.88px;top:687.00px;font-size:19.4px;transform:scaleX(1.1198);color:#000;">Monthly</span>
<span class="t" style="left:560.40px;top:687.00px;font-size:19.4px;transform:scaleX(1.0070);color:#000;">0.5</span>
<span class="t" style="left:682.75px;top:687.00px;font-size:19.4px;transform:scaleX(0.9919);color:#000;">$100</span>
<span class="t" style="left:813.40px;top:687.00px;font-size:19.4px;transform:scaleX(1.0480);color:#0563c1;">abcd2908@gmail.com</span>
<span class="t" style="left:57.74px;top:717.00px;font-size:19.4px;transform:scaleX(1.0070);color:#000;">14</span>
<span class="g"><span class="t" style="left:120.15px;top:717.00px;font-size:19.4px;transform:scaleX(1.2470);color:#000;">Mr.</span> <span class="t" style="left:158.00px;top:717.00px;font-size:19.4px;transform:scaleX(0.9944);color:#000;">Joseph</span> <span class="t" style="left:226.60px;top:717.00px;font-size:19.4px;transform:scaleX(0.9801);color:#000;">Xavier</span></span>
<span class="t" style="left:367.53px;top:717.00px;font-size:19.4px;transform:scaleX(0.9716);color:#000;">EDU18</span>
<span class="t" style="left:464.00px;top:717.00px;font-size:19.4px;transform:scaleX(1.0650);color:#000;">Quarterly</span>
<span class="t" style="left:560.19px;top:717.00px;font-size:19.4px;transform:scaleX(1.0070);color:#000;">1</span>
<span class="t" style="left:682.75px;top:717.00px;font-size:19.4px;transform:scaleX(0.9919);color:#000;">$200</span>
<span class="t" style="left:813.75px;top:717.00px;font-size:19.4px;transform:scaleX(1.0070);color:#000;">4540910306</span>
<span class="t" style="left:57.74px;top:747.00px;font-size:19.4px;transform:scaleX(1.0070);color:#000;">15</span>
<span class="g"><span class="t" style="left:120.30px;top:747.00px;font-size:19.4px;transform:scaleX(1.1047);color:#000;">Mrs.</span> <span class="t" style="left:167.60px;top:747.00px;font-size:19.4px;color:#000;">Vincent</span> <span class="t" style="left:240.41px;top:747.00px;font-size:19.4px;transform:scaleX(0.9870);color:#000;">Ryder</span></span>
<span class="t" style="left:367.53px;top:747.00px;font-size:19.4px;transform:scaleX(0.9716);color:#000;">EDU19</span>
<span class="t" style="left:462.88px;top:747.00px;font-size:19.4px;transform:scaleX(1.1198);color:#000;">Monthly</span>
<span class="t" style="left:560.19px;top:747.00px;font-size:19.4px;transform:scaleX(1.0070);color:#000;">1</span>
<span class="t" style="left:682.75px;top:747.00px;font-size:19.4px;transform:scaleX(0.9919);color:#000;">$200</span>
<span class="t" style="left:813.75px;top:747.00px;font-size:19.4px;transform:scaleX(1.0070);color:#000;">4444572544</span>
<span class="t" style="left:57.74px;top:777.00px;font-size:19.4px;transform:scaleX(1.0070);color:#000;">16</span>
<span class="g"><span class="t" style="left:120.15px;top:777.00px;font-size:19.4px;transform:scaleX(1.2470);color:#000;">Mr.</span> <span class="t" style="left:159.60px;top:777.00px;font-size:19.4px;transform:scaleX(1.0419);color:#000;">Wilson</span> <span class="t" style="left:226.40px;top:777.00px;font-size:19.4px;transform:scaleX(0.9959);color:#000;">Davis</span></span>
<span class="t" style="left:367.54px;top:777.00px;font-size:19.4px;transform:scaleX(0.9559);color:#000;">EDU20</span>
<span class="t" style="left:464.00px;top:777.00px;font-size:19.4px;transform:scaleX(1.0571);color:#000;">Annual</span>
<span class="t" style="left:560.40px;top:777.00px;font-size:19.4px;transform:scaleX(1.0070);color:#000;">2</span>
<span class="t" style="left:682.75px;top:777.00px;font-size:19.4px;transform:scaleX(0.9919);color:#000;">$350</span>
<span class="t" style="left:813.75px;top:777.00px;font-size:19.4px;transform:scaleX(1.0070);color:#000;">3454446677</span>
<span class="t" style="left:57.74px;top:807.00px;font-size:19.4px;transform:scaleX(1.0070);color:#000;">17</span>
<span class="g"><span class="t" style="left:120.30px;top:807.00px;font-size:19.4px;transform:scaleX(1.1047);color:#000;">Mrs.</span> <span class="t" style="left:167.40px;top:807.00px;font-size:19.4px;transform:scaleX(1.0650);color:#000;">Albert</span> <span class="t" style="left:228.47px;top:807.00px;font-size:19.4px;transform:scaleX(0.9325);color:#000;">Lacey</span></span>
<span class="t" style="left:367.53px;top:807.00px;font-size:19.4px;transform:scaleX(0.9716);color:#000;">EDU21</span>
<span class="t" style="left:462.88px;top:807.00px;font-size:19.4px;transform:scaleX(1.1198);color:#000;">Monthly</span>
<span class="t" style="left:560.40px;top:807.00px;font-size:19.4px;transform:scaleX(1.0070);color:#000;">3.5</span>
<span class="t" style="left:682.75px;top:807.00px;font-size:19.4px;transform:scaleX(1.0153);color:#000;">$625</span>
<span class="t" style="left:812.31px;top:807.00px;font-size:19.4px;transform:scaleX(1.0883);color:#0563c1;">mnop@yahoo.com</span>
<span class="t" style="left:57.74px;top:837.00px;font-size:19.4px;transform:scaleX(1.0070);color:#000;">18</span>
<span class="g"><span class="t" style="left:120.15px;top:837.00px;font-size:19.4px;transform:scaleX(1.2470);color:#000;">Mr.</span> <span class="t" style="left:159.00px;top:837.00px;font-size:19.4px;transform:scaleX(1.0326);color:#000;">Cornellues</span></span>
<span class="t" style="left:367.53px;top:837.00px;font-size:19.4px;transform:scaleX(0.9716);color:#000;">EDU22</span>
<span class="t" style="left:462.88px;top:837.00px;font-size:19.4px;transform:scaleX(1.1198);color:#000;">Monthly</span>
<span class="t" style="left:560.40px;top:837.00px;font-size:19.4px;transform:scaleX(1.0070);color:#000;">2</span>
<span class="t" style="left:682.75px;top:837.00px;font-size:19.4px;transform:scaleX(0.9919);color:#000;">$400</span>
<span class="t" style="left:813.75px;top:837.00px;font-size:19.4px;transform:scaleX(1.0070);color:#000;">5623143458</span>
<span class="t" style="left:503.60px;top:80.00px;font-size:26.6px;transform:scaleX(0.8944);color:#3b3b3b;">A</span>
<span class="t" style="left:545.00px;top:85.00px;font-size:20.6px;transform:scaleX(0.9214);color:#3b3b3b;">A</span>
<span class="t" style="left:256.18px;top:133.00px;font-size:19.9px;transform:scaleX(0.8231);font-weight:700;color:#3b3b3b;">B</span>
<span class="t" style="left:297.33px;top:132.00px;font-size:21.5px;transform:scaleX(1.0333);font-style:italic;font-family:'Liberation Serif', serif;color:#3b3b3b;">I</span>
<span class="t" style="left:332.52px;top:133.00px;font-size:18.8px;transform:scaleX(0.9750);color:#3b3b3b;">U</span>
<span class="t" style="left:524.50px;top:129.00px;font-size:21.8px;transform:scaleX(0.8867);color:#3b3b3b;">A</span>
<span class="t" style="left:957.80px;top:106.60px;font-size:26px;transform:scale(0.9826,1.2000);color:#3b3b3b;">%</span>
<span class="t" style="left:815.90px;top:82.00px;font-size:14px;transform:scaleX(1.0896);color:#3b3b3b;">ab</span>
<span class="t" style="left:815.90px;top:93.00px;font-size:14px;transform:scaleX(0.9286);color:#3b3b3b;">c</span>
<span class="t" style="left:906.10px;top:148.00px;font-size:13.3px;transform:scaleX(1.1966);color:#3b3b3b;">.0</span>
<span class="t" style="left:899.00px;top:160.00px;font-size:13.3px;transform:scaleX(1.1001);color:#3b3b3b;">.00</span>
<span class="t" style="left:938.11px;top:148.00px;font-size:13.3px;transform:scaleX(1.0942);color:#3b3b3b;">.00</span>
<span class="t" style="left:945.10px;top:160.00px;font-size:13.3px;transform:scaleX(1.1966);color:#3b3b3b;">.0</span>
<div class="b" style="left:0px;top:868px;width:1216px;height:32px;background:#fcfcfc;"></div>
<div class="b" style="left:-10px;top:869px;width:157px;height:40px;background:#f8f8f8;border:1px solid #e6e6e6;border-radius:0 7px 0 0;"></div>
<div class="b" style="left:233px;top:869px;width:1000px;height:40px;background:#f8f8f8;border:1px solid #e6e6e6;border-radius:7px 0 0 0;"></div>
<div class="b" style="left:239px;top:879px;width:1px;height:20px;background:#cfcfcf;"></div>
<svg width="1216" height="900" viewBox="0 0 1216 900" style="left:0;top:0"><g fill="none" stroke="#303030" stroke-width="1.45" stroke-linecap="round" stroke-linejoin="round"><path d="M18.8 71.4V80.6H28.8"/><path d="M18.8 80.6L26.2 73.9A7.7 7.7 0 0 1 37.05 84.75L26.6 94.6"/><path d="M39.2 110.3V119.6H29.2"/><path d="M39.2 119.6L31.7 112.6A7.8 7.8 0 0 0 20.7 123.6L31.4 133.6"/></g>
<path d="M53.2 81.6L57.1 85.3L61 81.6" fill="none" stroke="#222" stroke-width="1.6" stroke-linecap="round" stroke-linejoin="round"/>
<path d="M53.2 120.9L57.1 124.6L61 120.9" fill="none" stroke="#222" stroke-width="1.6" stroke-linecap="round" stroke-linejoin="round"/>
<g fill="none"><path d="M115.5 81H111.9V111.1H127.6" stroke="#fbdf9c" stroke-width="2.9"/><path d="M135 81H138.3V88.6" stroke="#fbdf9c" stroke-width="2.9"/><path d="M115.5 78.8H109.8V113.2H127.6" stroke="#e07407" stroke-width="1.6"/><path d="M135 78.8H140.3V88.6" stroke="#e07407" stroke-width="1.6"/><path d="M116 77.1H120.3A4.9 4.9 0 0 1 130.1 77.1H134.5V83H116Z" fill="#fff" stroke="#7d7d7d" stroke-width="1.2"/><rect x="130" y="90.9" width="19.2" height="25.2" fill="#fff" stroke="#303030" stroke-width="1.3"/></g>
<path d="M121.2 155.6L125.35 159.8L129.5 155.6" fill="none" stroke="#222" stroke-width="1.6" stroke-linecap="round" stroke-linejoin="round"/>
<g fill="none" stroke-linecap="round"><path d="M173.5 71.4L182.2 89M182.5 71.4L173.8 89" stroke="#303030" stroke-width="1.2"/><circle cx="173.6" cy="92.1" r="2.5" stroke="#1e8ad6" stroke-width="1.6"/><circle cx="182.5" cy="92.1" r="2.5" stroke="#1e8ad6" stroke-width="1.6"/></g>
<g fill="none" stroke="#303030" stroke-width="1.3" stroke-linejoin="miter"><path d="M173.6 130.5H167V110.9H174.8L177.3 113.2"/><path d="M175.8 115.4H184L189 120.6V133H175.8Z" fill="#fff"/><path d="M184 115.4V120.6H189"/><path d="M179.4 125.8H185.9M179.4 128.7H185.9" stroke="#6b6b6b" stroke-width="1.1"/></g>
<path d="M202.2 120.9L206.1 124.6L210 120.9" fill="none" stroke="#222" stroke-width="1.6" stroke-linecap="round" stroke-linejoin="round"/>
<g stroke-linejoin="round"><path d="M175.6 155.3Q171.4 158.6 167 159.6L176.6 170.6Q181 167.3 184.6 163.7Z" fill="#fff" stroke="#e07407" stroke-width="1.5"/><path d="M170.6 163.6L181.8 166.3L176.6 170.2Z" fill="#fbd57a" stroke="#e07407" stroke-width="1.1"/><g transform="rotate(40 181.2 158.3)" fill="#fff" stroke="#303030" stroke-width="1.4"><rect x="179.5" y="146.3" width="3.7" height="11" rx="1.7"/><rect x="175" y="156.5" width="12.4" height="3.3" rx="1"/></g></g>
<path d="M224.5 188.9H214.6V198.9M218.5 192.9L225.0 198.8M218.1 198.9H225.1V192.2" fill="none" stroke="#1f1f1f" stroke-width="1.5"/>
<path d="M413.2 93.2L417.1 97.4L421 93.2" fill="none" stroke="#222" stroke-width="1.6" stroke-linecap="round" stroke-linejoin="round"/>
<path d="M480.2 93.2L484.1 97.4L488 93.2" fill="none" stroke="#222" stroke-width="1.6" stroke-linecap="round" stroke-linejoin="round"/>
<path d="M518.8 88.2L522.3 84.9L525.8 88.2" fill="none" stroke="#1e8ad6" stroke-width="1.9" stroke-linecap="round" stroke-linejoin="round"/>
<path d="M557.9 85.2L561.3 88.5L564.7 85.2" fill="none" stroke="#1e8ad6" stroke-width="1.9" stroke-linecap="round" stroke-linejoin="round"/>
<path d="M332.6 151.2H345.8" stroke="#303030" stroke-width="1.5" stroke-linecap="round"/>
<path d="M364.1 141.4L368.15 145.5L372.2 141.4" fill="none" stroke="#222" stroke-width="1.6" stroke-linecap="round" stroke-linejoin="round"/>
<g fill="none" stroke="#222" stroke-width="1.3" stroke-dasharray="1.2 1.6"><path d="M393.2 132H415.8"/><path d="M393.8 133.5V151"/><path d="M415.2 133.5V151"/><path d="M404.5 133.5V151"/><path d="M395 142H414"/></g>
<path d="M393 152.5H415.8" stroke="#111" stroke-width="1.6"/>
<path d="M429.2 141.2L433.25 145.4L437.3 141.2" fill="none" stroke="#222" stroke-width="1.6" stroke-linecap="round" stroke-linejoin="round"/>
<g fill="none" stroke-linejoin="round" stroke-linecap="butt"><path d="M472.4 139.6V133A1.65 1.65 0 0 0 469.1 133V134.4L461.7 141.5L468.5 147.6L476.6 139.6" stroke="#333" stroke-width="1.35"/><path d="M474.5 137.7Q476 135.8 478 136.8Q480.3 138.6 479.6 142Q479.3 144.6 478.4 146.4Q478 141.5 476.2 139.8Z" fill="#1468c2" stroke="#1468c2" stroke-width=".6"/></g>
<rect x="458" y="149" width="24.2" height="6" fill="#ffff00"/>
<path d="M494.4 141.2L498.45 145.4L502.5 141.2" fill="none" stroke="#222" stroke-width="1.6" stroke-linecap="round" stroke-linejoin="round"/>
<rect x="519" y="149" width="24.2" height="6" fill="#ff0000"/>
<path d="M555.3 141.2L559.3499999999999 145.4L563.4 141.2" fill="none" stroke="#222" stroke-width="1.6" stroke-linecap="round" stroke-linejoin="round"/>
<path d="M575.3 188.9H565.4V198.9M569.3 192.9L575.8 198.8M568.9 198.9H575.9V192.2" fill="none" stroke="#1f1f1f" stroke-width="1.5"/>
<path d="M602.3 83.9H623.7" stroke="#303030" stroke-width="1.35" stroke-linecap="round"/>
<path d="M605.6 89.8H620" stroke="#303030" stroke-width="1.35" stroke-linecap="round"/>
<path d="M602.3 95.8H623.7" stroke="#303030" stroke-width="1.35" stroke-linecap="round"/>
<path d="M641.3 88H662.7" stroke="#303030" stroke-width="1.35" stroke-linecap="round"/>
<path d="M644.8 94.1H659.4" stroke="#303030" stroke-width="1.35" stroke-linecap="round"/>
<path d="M641.3 100.1H662.7" stroke="#303030" stroke-width="1.35" stroke-linecap="round"/>
<path d="M680.3 94.1H701.5" stroke="#303030" stroke-width="1.35" stroke-linecap="round"/>
<path d="M683.8 100.1H698.1" stroke="#303030" stroke-width="1.35" stroke-linecap="round"/>
<path d="M680.3 106H701.5" stroke="#303030" stroke-width="1.35" stroke-linecap="round"/>
<path d="M602.3 133.2H623.6" stroke="#303030" stroke-width="1.35" stroke-linecap="round"/>
<path d="M602.3 139.2H617.4" stroke="#303030" stroke-width="1.35" stroke-linecap="round"/>
<path d="M602.3 145.2H623.6" stroke="#303030" stroke-width="1.35" stroke-linecap="round"/>
<path d="M602.3 151.3H617.4" stroke="#303030" stroke-width="1.35" stroke-linecap="round"/>
<path d="M641.2 133.2H662.6" stroke="#303030" stroke-width="1.35" stroke-linecap="round"/>
<path d="M644.5 139.2H659.3" stroke="#303030" stroke-width="1.35" stroke-linecap="round"/>
<path d="M641.2 145.2H662.6" stroke="#303030" stroke-width="1.35" stroke-linecap="round"/>
<path d="M644.5 151.3H659.3" stroke="#303030" stroke-width="1.35" stroke-linecap="round"/>
<path d="M680.2 133.2H701.6" stroke="#303030" stroke-width="1.35" stroke-linecap="round"/>
<path d="M686.5 139.2H701.6" stroke="#303030" stroke-width="1.35" stroke-linecap="round"/>
<path d="M680.2 145.2H701.6" stroke="#303030" stroke-width="1.35" stroke-linecap="round"/>
<path d="M686.5 151.3H701.6" stroke="#303030" stroke-width="1.35" stroke-linecap="round"/>
<path d="M719.4 133.2H740.7" stroke="#303030" stroke-width="1.35" stroke-linecap="round"/>
<path d="M731.7 139.2H740.7" stroke="#303030" stroke-width="1.35" stroke-linecap="round"/>
<path d="M731.7 145.2H740.7" stroke="#303030" stroke-width="1.35" stroke-linecap="round"/>
<path d="M719.4 151.3H740.7" stroke="#303030" stroke-width="1.35" stroke-linecap="round"/>
<path d="M758.3 133.2H779.7" stroke="#303030" stroke-width="1.35" stroke-linecap="round"/>
<path d="M770.8 139.2H779.7" stroke="#303030" stroke-width="1.35" stroke-linecap="round"/>
<path d="M770.8 145.2H779.7" stroke="#303030" stroke-width="1.35" stroke-linecap="round"/>
<path d="M758.3 151.3H779.7" stroke="#303030" stroke-width="1.35" stroke-linecap="round"/>
<g fill="none" stroke="#1e8ad6" stroke-width="1.5" stroke-linecap="round" stroke-linejoin="round"><path d="M719.6 142.2H728.4M723 139.2L719.6 142.2L723 145.2"/><path d="M758.3 142.2H767M763.7 139.2L767 142.2L763.7 145.2"/><path d="M726.2 104.6L741.5 89.7M736.3 89.6H741.6V95"/><path d="M835 95.7Q836.3 101.7 830.5 101.7H825M829.7 97.6L824.8 101.7L829.7 106.2"/></g>
<path d="M751.3 93.9L755.2 97.4L759.1 93.9" fill="none" stroke="#222" stroke-width="1.6" stroke-linecap="round" stroke-linejoin="round"/>
<g fill="none"><path d="M812.9 136V132.2H833.9V136M812.9 148.4V152.4H833.9V148.4M822.9 132.2V135.5M822.9 149V152.4" stroke="#303030" stroke-width="1.25"/><rect x="813.1" y="136.4" width="20.6" height="11.8" fill="#fff" stroke="#1e8ad6" stroke-width="1.7"/><path d="M816 142.3H830.8M819 139.2L815.8 142.3L819 145.4M827.8 139.2L831 142.3L827.8 145.4" stroke="#1e8ad6" stroke-width="1.5" stroke-linecap="round" stroke-linejoin="round"/></g>
<path d="M848.4 141.9L852.2 145.6L856 141.9" fill="none" stroke="#222" stroke-width="1.6" stroke-linecap="round" stroke-linejoin="round"/>
<path d="M870.7 188.9H860.8V198.9M864.7 192.9L871.2 198.8M864.3 198.9H871.3V192.2" fill="none" stroke="#1f1f1f" stroke-width="1.5"/>
<path d="M1013.2 80.9L1017.1 85.2L1021 80.9" fill="none" stroke="#222" stroke-width="1.6" stroke-linecap="round" stroke-linejoin="round"/>
<g fill="none"><rect x="896.6" y="115.1" width="22.6" height="14" stroke="#303030" stroke-width="1.25"/><path d="M902.3 118.2H899.8V126.5H902.3" stroke="#303030" stroke-width="1.2"/><path d="M908.3 119.2A3.4 3.4 0 1 0 908.3 125.4" stroke="#303030" stroke-width="1.2"/><path d="M912 118.2H915.5" stroke="#303030" stroke-width="1.2"/><path d="M908.9 123.6V131.2C908.9 134 919.4 134 919.4 131.2V123.6Z" fill="#fff" stroke="#e07407" stroke-width="1.3"/><ellipse cx="914.15" cy="123.6" rx="5.25" ry="2.2" fill="#fbd57a" stroke="#e07407" stroke-width="1.3"/><path d="M908.9 127.6C908.9 130.2 919.4 130.2 919.4 127.6" stroke="#e07407" stroke-width="1.2"/></g>
<path d="M932.3 120.5L936.3499999999999 124.5L940.4 120.5" fill="none" stroke="#222" stroke-width="1.6" stroke-linecap="round" stroke-linejoin="round"/>
<path d="M1014 119.1c0-3.2-2.3-5.6-5.3-5.6c-2.9 0-5.2 2.2-5.2 5c0 2.7 2.1 4.7 4.7 4.7c.9 0 1.6-.2 2.2-.5c-.6 3-3 5.6-6.6 7.3l.5 1.1C1010 129 1014 124.6 1014 119.1z" fill="#303030"/>
<g fill="none" stroke="#1e8ad6" stroke-width="1.5" stroke-linecap="round" stroke-linejoin="round"><path d="M896.4 155.7H909M901.2 150.8L896.3 155.7L901.2 160.6"/><path d="M935.3 166.1H947.7M943 161.2L947.9 166.1L943 171"/></g>
<path d="M1030.5 188.9H1020.6V198.9M1024.5 192.9L1031.0 198.8M1024.1 198.9H1031.1V192.2" fill="none" stroke="#1f1f1f" stroke-width="1.5"/>
<g fill="none"><path d="M1056.6 72.9H1079.3V93H1056.6ZM1056.6 79.3H1079.3M1056.6 86.4H1079.3M1060.9 72.9V93M1068 72.9V93M1075.2 72.9V93" stroke="#4a4a4a" stroke-width="1.15"/><rect x="1061.3" y="79.8" width="5.2" height="6.2" fill="#9ccaf2"/><path d="M1061.3 79.8V86M1066.5 79.8V86" stroke="#1e6fc4" stroke-width="1.3"/><rect x="1061.2" y="73.4" width="8" height="5.6" fill="#f7a1ab" stroke="#d92020" stroke-width="1.4"/><rect x="1061.2" y="86.9" width="11" height="5.8" fill="#f7a1ab" stroke="#d92020" stroke-width="1.4"/></g>
<g fill="none"><path d="M1063.8 117.7H1079.4V131.9H1063.8Z" fill="#7db9ec"/><path d="M1071.8 117.7H1079.4V124.4H1071.8ZM1063.8 124.4H1071.8V131.9H1063.8Z" fill="#1f6fc6" opacity=".0"/><path d="M1063.8 117.7V131.9M1063.8 117.7H1079.4" stroke="#1e6fc4" stroke-width="1.3"/><path d="M1079.3 131.5V112.2H1056.6V131.5M1056.6 117.4H1079.3M1056.6 124.6H1064M1063.8 112.2V117.4M1071.6 112.2V117.4" stroke="#4a4a4a" stroke-width="1.15"/></g>
<g transform="translate(0 0)"><path d="M1079.4 118.5C1076 120.5 1070.5 125.5 1067.6 129.2L1069.3 130.8C1073 128 1078.6 122.6 1080.6 119.2C1081 118.3 1080.2 118 1079.4 118.5Z" fill="#fff" stroke="#303030" stroke-width="1.1" stroke-linejoin="round"/><path d="M1067.3 128.6C1064.6 128.6 1064.6 132 1060.6 132.4C1063.4 134.2 1069.6 134 1069.9 130.9Z" fill="#2f7fd3" stroke="#1c5fb0" stroke-width=".8" stroke-linejoin="round"/></g>
<g fill="none"><path d="M1060.8 155.4H1076V165.4H1060.8Z" fill="#7db9ec"/><path d="M1060.8 155.4V165.4M1060.8 155.4H1076" stroke="#1e6fc4" stroke-width="1.3"/><path d="M1079.3 170.8V151.3H1056.6V170.8M1056.6 155H1079.3M1056.6 165.8H1061M1060.6 151.3V155M1076.2 151.3V155M1076.2 165.6V170.8H1079.3M1076.2 170.8H1070" stroke="#4a4a4a" stroke-width="1.15"/></g>
<g transform="translate(0 39.2)"><path d="M1079.4 118.5C1076 120.5 1070.5 125.5 1067.6 129.2L1069.3 130.8C1073 128 1078.6 122.6 1080.6 119.2C1081 118.3 1080.2 118 1079.4 118.5Z" fill="#fff" stroke="#303030" stroke-width="1.1" stroke-linejoin="round"/><path d="M1067.3 128.6C1064.6 128.6 1064.6 132 1060.6 132.4C1063.4 134.2 1069.6 134 1069.9 130.9Z" fill="#2f7fd3" stroke="#1c5fb0" stroke-width=".8" stroke-linejoin="round"/></g>
<path d="M1170.6 158.4L1174.4499999999998 162.6L1178.3 158.4" fill="none" stroke="#222" stroke-width="1.6" stroke-linecap="round" stroke-linejoin="round"/>
<path d="M124.7 237.8L130.1 242.8L135.5 237.8" fill="none" stroke="#1f1f1f" stroke-width="2.1" stroke-linecap="round" stroke-linejoin="round"/>
<g fill="none" stroke="#a3a3a3" stroke-width="1.35" stroke-linecap="round" stroke-linejoin="round"><path d="M185.7 230.2L202.6 247M202.6 230.2L185.7 247"/><path d="M218.5 237.6L226.3 245.4L241.7 230.2"/></g>
<g fill="none" stroke="#b4b4b4" stroke-width="1.5" stroke-linecap="round" stroke-linejoin="round"><path d="M24.4 884.6L16.3 892.6L24.4 900.6"/><path d="M65.2 884.6L73.2 892.6L65.2 900.6"/></g>
<path d="M303.4 891.4H319.4M311.4 883.2V899.6" fill="none" stroke="#303030" stroke-width="1.4"/>
<path d="M1105.3 894.8L1109.6 890.4V893H1123.6V890.4L1127.9 894.8L1123.6 899.2V896.6H1109.6V899.2Z" fill="#fff" stroke="#1a1a2a" stroke-width="1"/>
<rect x="1136.2" y="886.2" width="3.4" height="3" fill="#4a4a4a"/><rect x="1136.2" y="892.2" width="3.4" height="3" fill="#4a4a4a"/><rect x="1136.2" y="898" width="3.4" height="2" fill="#4a4a4a"/>
<path d="M1179.6 885.4V898.6L1170.2 892Z" fill="#767676" stroke="#767676" stroke-width="1" stroke-linejoin="round"/>
<rect x="1188" y="886.2" width="40" height="12" rx="5.5" fill="#767676"/></svg>
<span class="t" style="left:724.6px;top:87.3px;font-size:15.2px;color:#3b3b3b;transform:rotate(-47deg);transform-origin:0 100%;line-height:1;">ab</span>
<span class="t" style="left:159.40px;top:879.00px;font-size:20px;transform:scaleX(0.9410);font-weight:700;">Sheet1</span>
<div class="b" style="left:0;top:0;width:1216px;height:1px;background:#6e6e6e"></div>
<div class="b" style="left:1161px;top:0;width:55px;height:1px;background:#3c3c3c"></div>
<div class="b" style="left:0;top:0;width:1px;height:900px;background:#6e6e6e"></div>
<div class="b" style="left:0;top:899px;width:1216px;height:1px;background:#5f5f5f"></div>
</div></body></html>
